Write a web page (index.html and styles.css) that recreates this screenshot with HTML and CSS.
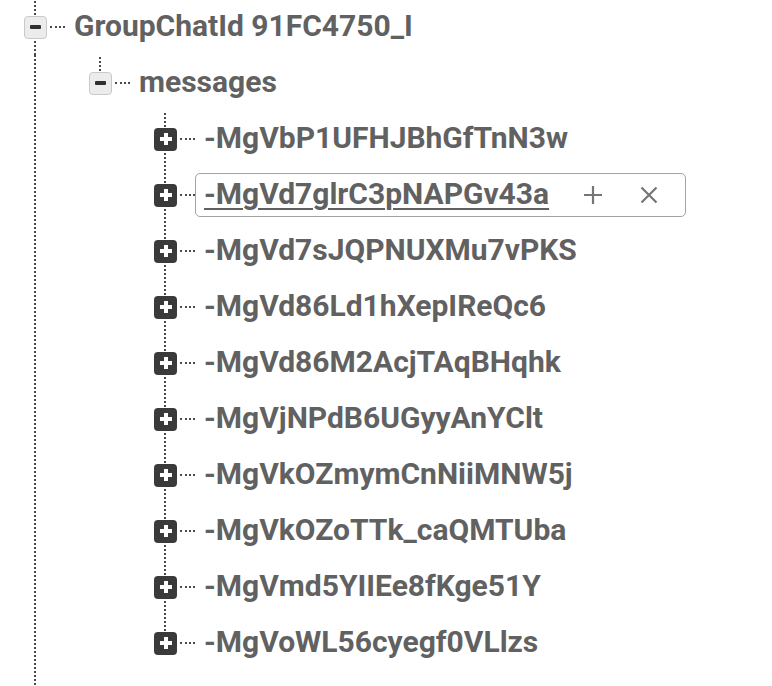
FILE: index.html
```html
<!DOCTYPE html>
<html>
<head>
<meta charset="utf-8">
<link rel="stylesheet" href="styles.css">
</head>
<body>
<div class="tree">
  <div class="node">
    <div class="row">
      <span class="cell full"><span class="tog minus"></span></span>
      <span class="dots"></span>
      <span class="label">GroupChatId 91FC4750_I</span>
    </div>
    <div class="kids rail">
      <div class="node">
        <div class="row">
          <span class="cell top"><span class="tog minus"></span></span>
          <span class="dots"></span>
          <span class="label">messages</span>
        </div>
        <div class="kids">
          <div class="row"><span class="cell full"><span class="tog plus"></span></span><span class="dots"></span><span class="label">-MgVbP1UFHJBhGfTnN3w</span></div>
          <div class="row"><span class="cell full"><span class="tog plus"></span></span><span class="dots"></span><span class="label selected"><span class="key">-MgVd7glrC3pNAPGv43a</span><span class="act"><svg width="22" height="22" viewBox="0 0 22 22"><path d="M11 2v18M2 11h18" stroke="#757575" stroke-width="2.2" fill="none"/></svg></span><span class="act"><svg width="22" height="22" viewBox="0 0 22 22"><path d="M3.5 3.5l15 15M18.5 3.5l-15 15" stroke="#757575" stroke-width="2.2" fill="none"/></svg></span></span></div>
          <div class="row"><span class="cell full"><span class="tog plus"></span></span><span class="dots"></span><span class="label">-MgVd7sJQPNUXMu7vPKS</span></div>
          <div class="row"><span class="cell full"><span class="tog plus"></span></span><span class="dots"></span><span class="label">-MgVd86Ld1hXepIReQc6</span></div>
          <div class="row"><span class="cell full"><span class="tog plus"></span></span><span class="dots"></span><span class="label">-MgVd86M2AcjTAqBHqhk</span></div>
          <div class="row"><span class="cell full"><span class="tog plus"></span></span><span class="dots"></span><span class="label">-MgVjNPdB6UGyyAnYClt</span></div>
          <div class="row"><span class="cell full"><span class="tog plus"></span></span><span class="dots"></span><span class="label">-MgVkOZmymCnNiiMNW5j</span></div>
          <div class="row"><span class="cell full"><span class="tog plus"></span></span><span class="dots"></span><span class="label">-MgVkOZoTTk_caQMTUba</span></div>
          <div class="row"><span class="cell full"><span class="tog plus"></span></span><span class="dots"></span><span class="label">-MgVmd5YIIEe8fKge51Y</span></div>
          <div class="row"><span class="cell top"><span class="tog plus"></span></span><span class="dots"></span><span class="label">-MgVoWL56cyegf0VLlzs</span></div>
        </div>
      </div>
    </div>
  </div>
</div>
</body>
</html>
```

FILE: styles.css
```css
html, body {
  margin: 0;
  padding: 0;
  background: #ffffff;
}

body {
  font-family: Roboto, "Liberation Sans", sans-serif;
  color: #616161;
  overflow: hidden;
  height: 686px;
}

.tree {
  margin-top: -1px;
  padding-left: 24px;
}

.row {
  display: flex;
  align-items: center;
  height: 56px;
}

.cell {
  width: 23px;
  height: 56px;
  display: flex;
  align-items: center;
  justify-content: center;
  flex: none;
  background-repeat: no-repeat;
}

.cell.full {
  background-image: repeating-linear-gradient(to bottom, #4a4a4a 0 2px, transparent 2px 4px);
  background-size: 2px 100%;
  background-position: 10px 2px;
}

.cell.top {
  background-image: repeating-linear-gradient(to bottom, #4a4a4a 0 2px, transparent 2px 4px);
  background-size: 2px 28px;
  background-position: 10px 2px;
}

.tog {
  width: 23px;
  height: 23px;
  box-sizing: border-box;
  border-radius: 4px;
  display: flex;
  align-items: center;
  justify-content: center;
}

.tog.minus {
  background: #ececec;
  border: 1px solid #c9c9c9;
}

.tog.minus::before {
  content: "";
  width: 11px;
  height: 4px;
  background: #2f2f2f;
  border-radius: 1px;
}

.tog.plus {
  background: #3a3a3a;
  background-image:
    linear-gradient(#ffffff, #ffffff),
    linear-gradient(#ffffff, #ffffff);
  background-size: 12px 4px, 4px 12px;
  background-position: center, center;
  background-repeat: no-repeat;
  border-radius: 4px;
}

.dots {
  width: 15px;
  margin-left: 3px;
  border-top: 2px dotted #4a4a4a;
  flex: none;
}

.label {
  display: flex;
  align-items: center;
  height: 44px;
  box-sizing: border-box;
  border: 1px solid transparent;
  border-radius: 5px;
  padding: 0 8px 3px 8px;
  font-size: 30px;
  font-weight: 700;
  white-space: nowrap;
  letter-spacing: 0;
}

.label.selected {
  border-color: #a3a3a3;
  width: 491px;
  padding-right: 18px;
}

.key {
  text-decoration: underline;
  text-decoration-thickness: 2px;
  text-underline-offset: 4px;
  flex: 1;
}

.act {
  width: 36px;
  height: 36px;
  display: flex;
  align-items: center;
  justify-content: center;
  margin-left: 20px;
  margin-top: 3px;
}

.kids {
  padding-left: 65px;
}

.kids.rail {
  background-image: repeating-linear-gradient(to bottom, #4a4a4a 0 2px, transparent 2px 4px);
  background-size: 2px 100%;
  background-position: 10px 0;
  background-repeat: no-repeat;
  min-height: 631px;
}
```
